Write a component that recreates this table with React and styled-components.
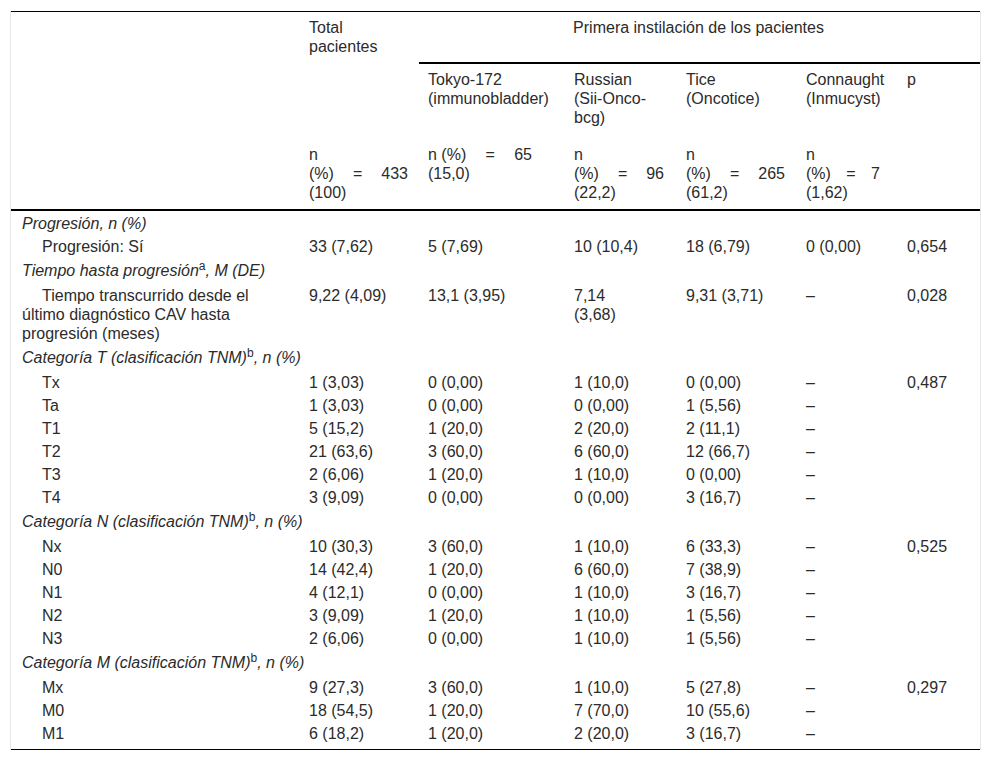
import React from 'react';
import styled, { createGlobalStyle } from 'styled-components';

const GlobalStyle = createGlobalStyle`
  body {
    margin: 0;
    background: #fff;
  }
`;

const Page = styled.div`
  padding: 11px 0 0 10px;
  font-family: 'Liberation Sans', Arial, sans-serif;
  font-size: 16px;
  line-height: 19px;
  color: #2b2b2b;
`;

const Frame = styled.div`
  width: 969px;
  border-left: 1px solid #e6e6e6;
  border-right: 1px solid #e6e6e6;
`;

const Table = styled.table`
  width: 969px;
  table-layout: fixed;
  border-collapse: separate;
  border-spacing: 0;
  border-top: 1px solid #000;
  border-bottom: 1px solid #000;
`;

const HeadRow = styled.tr`
  height: ${(p) => p.$h}px;
`;

const HeadCell = styled.th`
  font-weight: normal;
  text-align: ${(p) => (p.$center ? 'center' : 'left')};
  vertical-align: top;
  padding: 6px ${(p) => (p.$center ? '11px' : '0')} 0 9px;
  white-space: nowrap;
  border-bottom: ${(p) => (p.$rule ? '2px solid #000' : '0')};
`;

const Body = styled.tbody`
  tr:first-child td {
    border-top: 2px solid #000;
    padding-top: 3px;
  }
  tr:last-child td {
    padding-bottom: 6px;
  }
`;

const Cell = styled.td`
  vertical-align: top;
  white-space: nowrap;
  padding: 2px 0 2px 9px;
`;

const LabelCell = styled(Cell)`
  padding-left: 11px;
  padding-top: ${(p) => (p.$tall ? '3px' : '2px')};
  padding-bottom: ${(p) => (p.$tall ? '4px' : '2px')};
  text-indent: ${(p) => (p.$indent ? '20px' : '0')};
  font-style: ${(p) => (p.$group ? 'italic' : 'normal')};
`;

const Sup = styled.sup`
  position: relative;
  top: -6px;
  vertical-align: baseline;
  font-size: 12px;
  line-height: 0;
  font-style: normal;
`;

const CountLine = styled.div`
  display: flex;
  justify-content: space-between;
  width: ${(p) => p.$w}px;
`;

const widths = [289, 119, 146, 112, 120, 101, 82];

const counts = [
  { w: 99, lines: [['n'], ['(%)', '=', '433'], ['(100)']] },
  { w: 104, lines: [['n (%)', '=', '65'], ['(15,0)']] },
  { w: 90, lines: [['n'], ['(%)', '=', '96'], ['(22,2)']] },
  { w: 99, lines: [['n'], ['(%)', '=', '265'], ['(61,2)']] },
  { w: 74, lines: [['n'], ['(%)', '=', '7'], ['(1,62)']] },
];

const D = '–';

const rows = [
  { group: <>Progresión, n (%)</> },
  { label: 'Progresión: Sí', vals: ['33 (7,62)', '5 (7,69)', '10 (10,4)', '18 (6,79)', '0 (0,00)', '0,654'] },
  { group: <>Tiempo hasta progresión<Sup>a</Sup>, M (DE)</>, tall: true },
  {
    label: <>Tiempo transcurrido desde el<br />último diagnóstico CAV hasta<br />progresión (meses)</>,
    vals: ['9,22 (4,09)', '13,1 (3,95)', <>7,14<br />(3,68)</>, '9,31 (3,71)', D, '0,028'],
  },
  { group: <>Categoría T (clasificación TNM)<Sup>b</Sup>, n (%)</>, tall: true },
  { label: 'Tx', vals: ['1 (3,03)', '0 (0,00)', '1 (10,0)', '0 (0,00)', D, '0,487'] },
  { label: 'Ta', vals: ['1 (3,03)', '0 (0,00)', '0 (0,00)', '1 (5,56)', D, ''] },
  { label: 'T1', vals: ['5 (15,2)', '1 (20,0)', '2 (20,0)', '2 (11,1)', D, ''] },
  { label: 'T2', vals: ['21 (63,6)', '3 (60,0)', '6 (60,0)', '12 (66,7)', D, ''] },
  { label: 'T3', vals: ['2 (6,06)', '1 (20,0)', '1 (10,0)', '0 (0,00)', D, ''] },
  { label: 'T4', vals: ['3 (9,09)', '0 (0,00)', '0 (0,00)', '3 (16,7)', D, ''] },
  { group: <>Categoría N (clasificación TNM)<Sup>b</Sup>, n (%)</>, tall: true },
  { label: 'Nx', vals: ['10 (30,3)', '3 (60,0)', '1 (10,0)', '6 (33,3)', D, '0,525'] },
  { label: 'N0', vals: ['14 (42,4)', '1 (20,0)', '6 (60,0)', '7 (38,9)', D, ''] },
  { label: 'N1', vals: ['4 (12,1)', '0 (0,00)', '1 (10,0)', '3 (16,7)', D, ''] },
  { label: 'N2', vals: ['3 (9,09)', '1 (20,0)', '1 (10,0)', '1 (5,56)', D, ''] },
  { label: 'N3', vals: ['2 (6,06)', '0 (0,00)', '1 (10,0)', '1 (5,56)', D, ''] },
  { group: <>Categoría M (clasificación TNM)<Sup>b</Sup>, n (%)</>, tall: true },
  { label: 'Mx', vals: ['9 (27,3)', '3 (60,0)', '1 (10,0)', '5 (27,8)', D, '0,297'] },
  { label: 'M0', vals: ['18 (54,5)', '1 (20,0)', '7 (70,0)', '10 (55,6)', D, ''] },
  { label: 'M1', vals: ['6 (18,2)', '1 (20,0)', '2 (20,0)', '3 (16,7)', D, ''] },
];

function Count({ w, lines }) {
  return lines.map((words, i) => (
    <CountLine key={i} $w={w}>
      {words.map((word) => (
        <span key={word}>{word}</span>
      ))}
    </CountLine>
  ));
}

export default function App() {
  return (
    <Page>
      <GlobalStyle />
      <Frame>
        <Table>
          <colgroup>
            {widths.map((w, i) => (
              <col key={i} style={{ width: w }} />
            ))}
          </colgroup>
          <thead>
            <HeadRow $h={52}>
              <HeadCell rowSpan={3} />
              <HeadCell rowSpan={2}>
                Total
                <br />
                pacientes
              </HeadCell>
              <HeadCell colSpan={5} $center $rule>
                Primera instilación de los pacientes
              </HeadCell>
            </HeadRow>
            <HeadRow $h={75}>
              <HeadCell>
                Tokyo-172
                <br />
                (immunobladder)
              </HeadCell>
              <HeadCell>
                Russian
                <br />
                (Sii-Onco-
                <br />
                bcg)
              </HeadCell>
              <HeadCell>
                Tice
                <br />
                (Oncotice)
              </HeadCell>
              <HeadCell>
                Connaught
                <br />
                (Inmucyst)
              </HeadCell>
              <HeadCell>p</HeadCell>
            </HeadRow>
            <HeadRow $h={70}>
              {counts.map((c, i) => (
                <HeadCell key={i}>
                  <Count w={c.w} lines={c.lines} />
                </HeadCell>
              ))}
              <HeadCell />
            </HeadRow>
          </thead>
          <Body>
            {rows.map((r, i) =>
              r.group ? (
                <tr key={i}>
                  <LabelCell colSpan={7} $group $tall={r.tall}>
                    {r.group}
                  </LabelCell>
                </tr>
              ) : (
                <tr key={i}>
                  <LabelCell $indent>{r.label}</LabelCell>
                  {r.vals.map((v, j) => (
                    <Cell key={j}>{v}</Cell>
                  ))}
                </tr>
              )
            )}
          </Body>
        </Table>
      </Frame>
    </Page>
  );
}
